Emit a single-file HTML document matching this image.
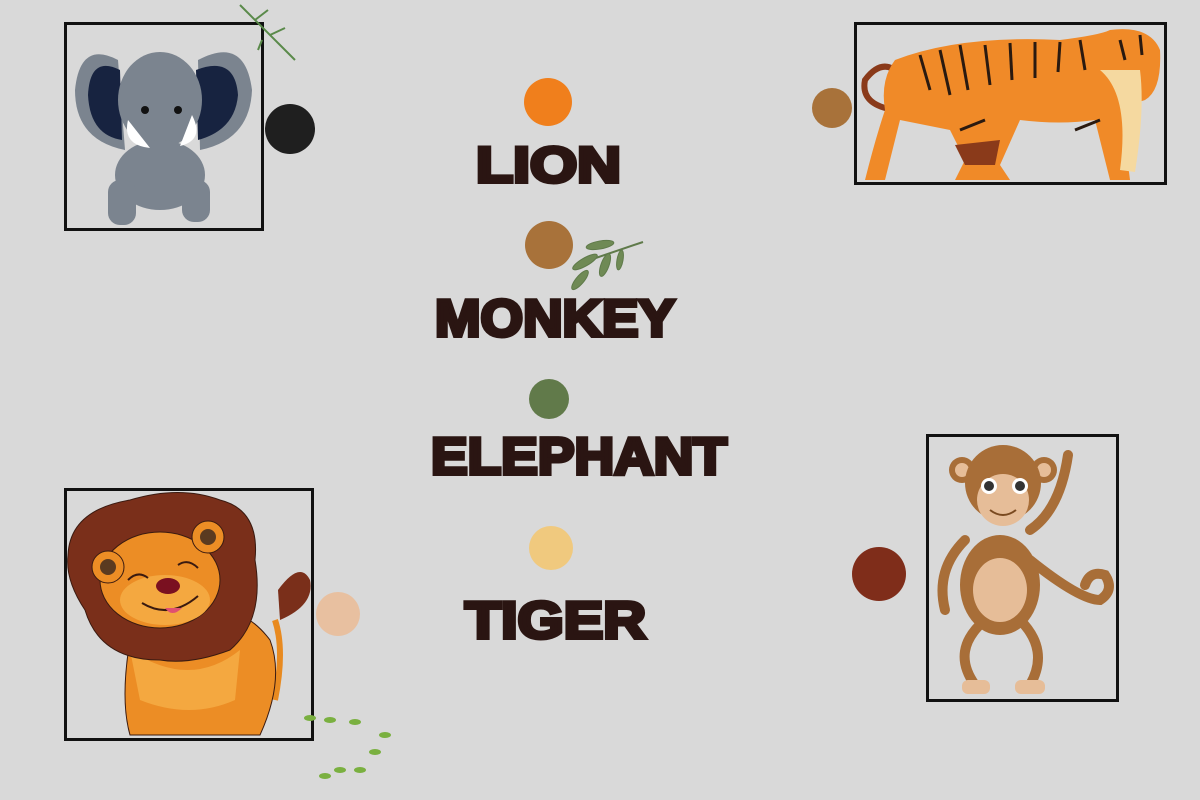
<!DOCTYPE html>
<html><head><meta charset="utf-8"><style>
html,body{margin:0;padding:0;background:#d9d9d9;width:1200px;height:800px;overflow:hidden}
svg{position:absolute;left:0;top:0}
</style></head><body>
<svg width="1200" height="800" viewBox="0 0 1200 800" xmlns="http://www.w3.org/2000/svg">
<rect width="1200" height="800" fill="#d9d9d9"/>
<circle cx="548" cy="102" r="24" fill="#f07f1c"/>
<circle cx="549" cy="245" r="24" fill="#a8723a"/>
<circle cx="549" cy="399" r="20" fill="#617a4a"/>
<circle cx="551" cy="548" r="22" fill="#f0c97e"/>
<circle cx="290" cy="129" r="25" fill="#1f1f1f"/>
<circle cx="832" cy="108" r="20" fill="#a8723a"/>
<circle cx="338" cy="614" r="22" fill="#e8c0a0"/>
<circle cx="879" cy="574" r="27" fill="#7f2d1a"/>
<g stroke="#5f7a4a" fill="#6f8a55">
<line x1="575" y1="265" x2="643" y2="242" stroke-width="2"/>
<ellipse cx="600" cy="245" rx="14" ry="4" transform="rotate(-10 600 245)"/>
<ellipse cx="585" cy="262" rx="14" ry="4" transform="rotate(-30 585 262)"/>
<ellipse cx="605" cy="265" rx="12" ry="4" transform="rotate(-70 605 265)"/>
<ellipse cx="620" cy="260" rx="10" ry="3" transform="rotate(-80 620 260)"/>
<ellipse cx="580" cy="280" rx="12" ry="4" transform="rotate(-50 580 280)"/>
</g>
<g font-family="Liberation Sans, sans-serif" font-weight="900" fill="#2a1512" stroke="#2a1512" stroke-width="4" stroke-linejoin="miter">
<text x="476" y="182" font-size="50" textLength="145" lengthAdjust="spacingAndGlyphs">LION</text>
<text x="435" y="336" font-size="52" textLength="240" lengthAdjust="spacingAndGlyphs">MONKEY</text>
<text x="431" y="474" font-size="52" textLength="296" lengthAdjust="spacingAndGlyphs">ELEPHANT</text>
<text x="465" y="638" font-size="52" textLength="181" lengthAdjust="spacingAndGlyphs">TIGER</text>
</g>
<!-- elephant -->
<rect x="65.5" y="23.5" width="197" height="206" fill="none" stroke="#111" stroke-width="3"/>
<g>
<path d="M118 60 Q80 40 75 90 Q75 140 125 150 Z" fill="#7b848f"/>
<path d="M198 60 Q245 35 252 90 Q250 140 200 150 Z" fill="#7b848f"/>
<path d="M120 70 Q90 55 88 95 Q90 135 122 140 Z" fill="#172340"/>
<path d="M196 70 Q235 55 238 95 Q235 130 198 140 Z" fill="#172340"/>
<ellipse cx="160" cy="100" rx="42" ry="48" fill="#7b848f"/>
<ellipse cx="160" cy="175" rx="45" ry="35" fill="#7b848f"/>
<rect x="108" y="180" width="28" height="45" rx="12" fill="#7b848f"/>
<rect x="182" y="180" width="28" height="42" rx="12" fill="#7b848f"/>
</g>
<circle cx="145" cy="110" r="4" fill="#111"/><circle cx="178" cy="110" r="4" fill="#111"/>
<path d="M128 120 Q122 145 150 148 Z" fill="#fff"/><path d="M192 115 Q205 140 180 146 Z" fill="#fff"/>
<g stroke="#5a8a4a" stroke-width="2"><line x1="240" y1="5" x2="295" y2="60"/><line x1="255" y1="20" x2="268" y2="10"/><line x1="270" y1="35" x2="285" y2="28"/><line x1="262" y1="40" x2="258" y2="50"/></g>
<!-- tiger -->
<rect x="855.5" y="23.5" width="310" height="160" fill="none" stroke="#111" stroke-width="3"/>
<path d="M895 70 Q880 60 865 80 Q860 105 895 110" fill="none" stroke="#8a3a1a" stroke-width="6"/>
<path d="M895 60 Q960 35 1060 40 Q1100 35 1110 30 Q1150 25 1160 50 Q1162 90 1145 100 Q1130 105 1120 100 L1130 180 L1110 180 L1095 120 Q1060 125 1020 120 L1000 165 L1010 180 L955 180 L965 160 L950 130 L900 120 L885 180 L865 180 Q875 140 885 110 Q880 80 895 60 Z" fill="#f08a28"/>
<path d="M1100 70 Q1130 95 1120 170 L1135 172 Q1145 110 1140 70 Z" fill="#f5d9a0"/>
<g stroke="#2a1a10" stroke-width="3" fill="none">
<path d="M920 55 L930 90"/><path d="M940 50 L950 95"/><path d="M960 45 L968 90"/><path d="M985 45 L990 85"/><path d="M1010 43 L1012 80"/><path d="M1035 42 L1035 78"/><path d="M1060 42 L1058 72"/><path d="M1080 40 L1085 70"/><path d="M960 130 L985 120"/><path d="M1075 130 L1100 120"/><path d="M1120 40 L1125 60"/><path d="M1140 35 L1142 55"/>
</g>
<path d="M955 145 L1000 140 L995 165 L965 165 Z" fill="#8a3a1a"/>
<!-- lion -->
<rect x="65.5" y="489.5" width="247" height="250" fill="none" stroke="#111" stroke-width="3"/>
<path d="M275 620 Q285 650 275 700" fill="none" stroke="#e88a20" stroke-width="6"/>
<path d="M278 590 Q300 560 310 580 Q315 605 280 620 Z" fill="#7a2f1a"/>
<path d="M130 640 Q120 700 130 735 L260 735 Q285 680 270 640 Q240 600 190 610 Z" fill="#ec8d25" stroke="#3a1a10"/>
<path d="M130 650 Q190 690 240 650 L235 700 Q190 720 140 700 Z" fill="#f4a840"/>
<path d="M68 555 Q70 510 130 500 Q180 485 220 500 Q260 510 255 560 Q265 620 230 650 Q190 665 160 660 Q100 660 85 610 Q65 580 68 555 Z" fill="#7a2f1a" stroke="#3a1a10"/>
<ellipse cx="160" cy="580" rx="60" ry="48" fill="#ec8d25" stroke="#3a1a10"/>
<ellipse cx="165" cy="600" rx="45" ry="25" fill="#f4a840"/>
<circle cx="108" cy="567" r="16" fill="#ec8d25" stroke="#3a1a10"/><circle cx="108" cy="567" r="8" fill="#5a3a20"/>
<circle cx="208" cy="537" r="16" fill="#ec8d25" stroke="#3a1a10"/><circle cx="208" cy="537" r="8" fill="#5a3a20"/>
<path d="M128 580 Q138 570 148 578 M178 565 Q188 558 198 568" stroke="#3a1a10" stroke-width="2" fill="none"/>
<ellipse cx="168" cy="586" rx="12" ry="8" fill="#7a1020"/>
<path d="M142 603 Q170 620 198 596" stroke="#3a1a10" stroke-width="2" fill="none"/>
<path d="M165 608 Q172 618 182 608 Z" fill="#e05070"/>
<!-- monkey -->
<rect x="927.5" y="435.5" width="190" height="265" fill="none" stroke="#111" stroke-width="3"/>
<g fill="none" stroke="#a86e38" stroke-width="10" stroke-linecap="round">
<path d="M1030 560 Q1080 600 1100 600 Q1115 590 1105 575 Q1090 570 1085 585"/>
<path d="M965 540 Q935 570 945 610"/>
<path d="M1030 530 Q1060 510 1068 455"/>
<path d="M985 620 Q950 650 975 685"/>
<path d="M1020 620 Q1050 650 1030 685"/>
</g>
<ellipse cx="1000" cy="585" rx="40" ry="50" fill="#a86e38"/>
<ellipse cx="1000" cy="590" rx="27" ry="32" fill="#e6bd98"/>
<circle cx="962" cy="470" r="13" fill="#a86e38"/><circle cx="962" cy="470" r="7" fill="#e6bd98"/>
<circle cx="1044" cy="470" r="13" fill="#a86e38"/><circle cx="1044" cy="470" r="7" fill="#e6bd98"/>
<circle cx="1003" cy="483" r="38" fill="#a86e38"/>
<ellipse cx="1003" cy="500" rx="26" ry="26" fill="#e6bd98"/>
<circle cx="989" cy="486" r="8" fill="#fff"/><circle cx="989" cy="486" r="5" fill="#333"/>
<circle cx="1020" cy="486" r="8" fill="#fff"/><circle cx="1020" cy="486" r="5" fill="#333"/>
<path d="M990 510 Q1003 520 1016 510" stroke="#7a4a20" stroke-width="2" fill="none"/>
<rect x="962" y="680" width="28" height="14" rx="6" fill="#e6bd98"/>
<rect x="1015" y="680" width="30" height="14" rx="6" fill="#e6bd98"/>
<g fill="#7ab040"><ellipse cx="310" cy="718" rx="6" ry="3"/><ellipse cx="330" cy="720" rx="6" ry="3"/><ellipse cx="355" cy="722" rx="6" ry="3"/><ellipse cx="385" cy="735" rx="6" ry="3"/><ellipse cx="375" cy="752" rx="6" ry="3"/><ellipse cx="340" cy="770" rx="6" ry="3"/><ellipse cx="325" cy="776" rx="6" ry="3"/><ellipse cx="360" cy="770" rx="6" ry="3"/></g>
</svg>
</body></html>
